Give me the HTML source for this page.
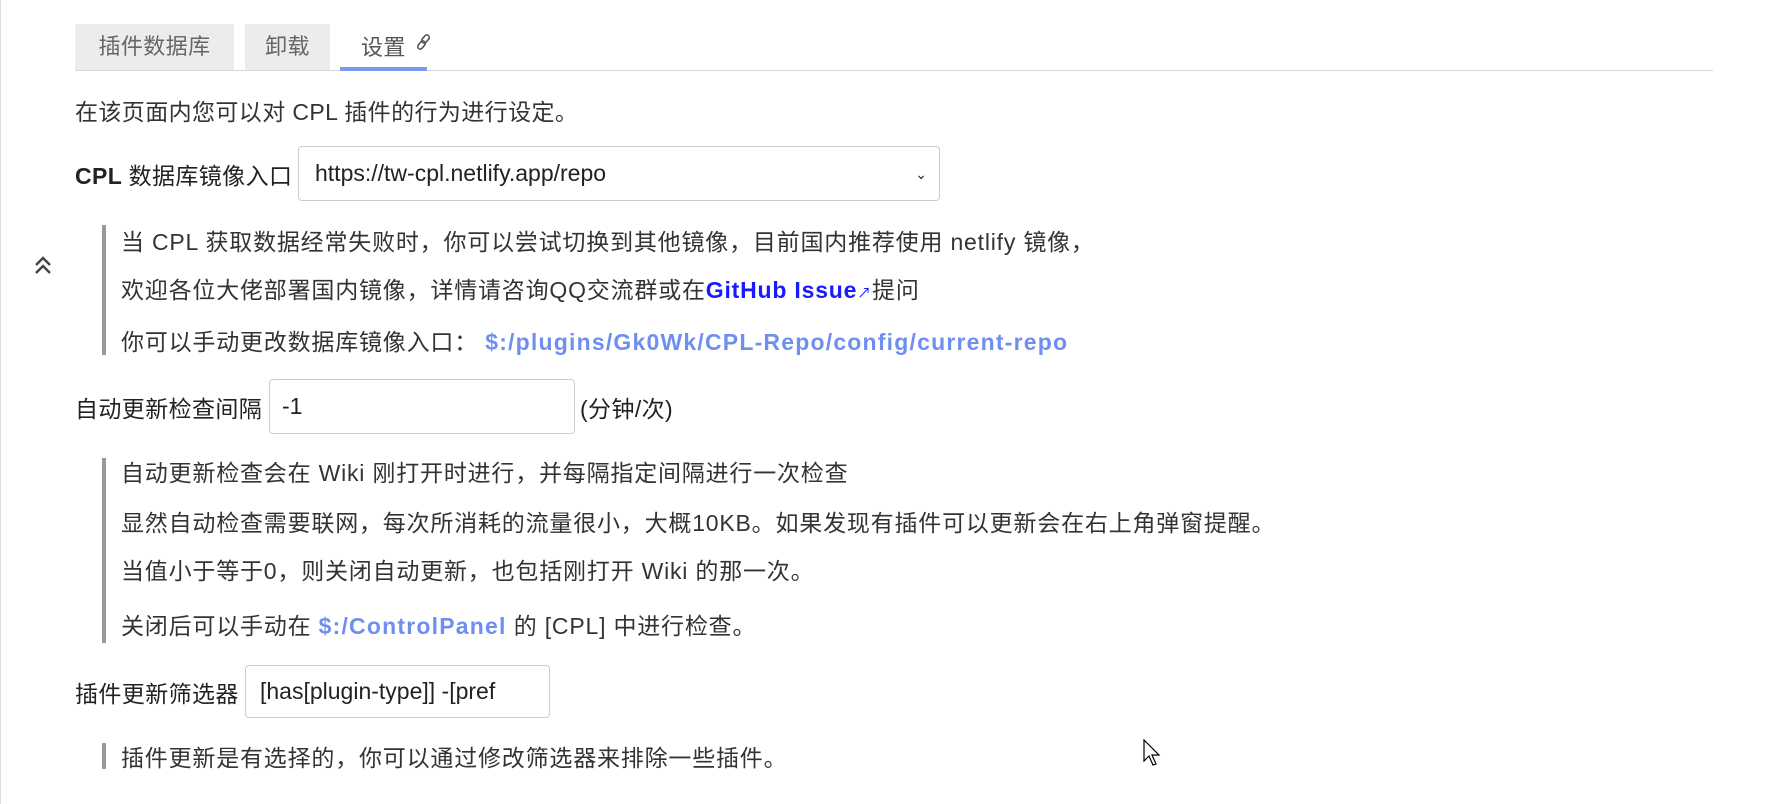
<!DOCTYPE html>
<html><head><meta charset="utf-8">
<style>
html,body{margin:0;padding:0;background:#fff;}
body{width:1785px;height:804px;position:relative;overflow:hidden;font-family:"Liberation Sans","Noto Sans CJK SC",sans-serif;color:#333;font-size:23px;letter-spacing:0.4px;}
.lb{position:absolute;left:0;top:0;width:1px;height:804px;background:#ddd;}
.abs{position:absolute;white-space:nowrap;}
.t{letter-spacing:0.8px;}
.tab{position:absolute;top:24px;height:46px;background:#ececec;color:#666;font-size:22px;line-height:46px;text-align:center;}
.tabline{position:absolute;left:75px;top:70px;width:1638px;height:1px;background:#d8d8d8;}
.bq{position:absolute;left:102px;width:4px;background:#9a9a9a;}
.box{position:absolute;border:1px solid #ccc;border-radius:4px;background:#fff;box-sizing:border-box;font-size:23px;color:#222;letter-spacing:0;}
.l1{color:#1a1aff;font-weight:bold;letter-spacing:0.8px;}
.l2{color:#6f8ff0;font-weight:bold;letter-spacing:1.2px;}
.lab{color:#222;}
</style></head><body>
<div class="lb"></div>
<div class="tab" style="left:75px;width:159px;">插件数据库</div>
<div class="tab" style="left:245px;width:85px;">卸载</div>
<div class="abs" style="left:361px;top:30px;color:#555;font-size:22px;">设置</div>
<svg class="abs" style="left:415px;top:33px" width="18" height="18" viewBox="0 0 18 18"><g fill="none" stroke="#555" stroke-width="1.6"><rect x="8" y="1.5" width="5" height="9" rx="2.5" transform="rotate(40 10.5 6)"/><rect x="4" y="7.5" width="5" height="9" rx="2.5" transform="rotate(40 6.5 12)"/></g></svg>
<div class="tabline"></div>
<div class="abs" style="left:340px;top:67px;width:87px;height:4px;background:#7b9aeb;"></div>

<div class="abs" style="left:75px;top:93px;">在该页面内您可以对 CPL 插件的行为进行设定。</div>

<div class="abs lab" style="left:75px;top:157px;font-weight:bold;">CPL <span style="font-weight:normal">数据库镜像入口</span></div>
<div class="box" style="left:298px;top:146px;width:642px;height:55px;line-height:53px;padding-left:16px;">https://tw-cpl.netlify.app/repo<span style="position:absolute;right:12px;font-size:14px;top:1px;">&#x2304;</span></div>

<svg class="abs" style="left:33px;top:254px" width="20" height="22" viewBox="0 0 20 22"><g fill="none" stroke="#444" stroke-width="2.4"><path d="M3 11 L10 4 L17 11"/><path d="M3 19 L10 12 L17 19"/></g></svg>
<div class="bq" style="top:225px;height:130px;"></div>
<div class="abs t" style="left:121px;top:223px;">当 CPL 获取数据经常失败时，你可以尝试切换到其他镜像，目前国内推荐使用 netlify 镜像，</div>
<div class="abs t" style="left:121px;top:271px;">欢迎各位大佬部署国内镜像，详情请咨询QQ交流群或在<span class="l1">GitHub Issue</span><span style="color:#1a1aff;font-size:14px">&#x2197;</span>提问</div>
<div class="abs t" style="left:121px;top:323px;">你可以手动更改数据库镜像入口： <span class="l2">$:/plugins/Gk0Wk/CPL-Repo/config/current-repo</span></div>

<div class="abs lab" style="left:75px;top:390px;">自动更新检查间隔</div>
<div class="box" style="left:269px;top:379px;width:306px;height:55px;line-height:53px;padding-left:12px;">-1</div>
<div class="abs lab" style="left:580px;top:390px;">(分钟/次)</div>

<div class="bq" style="top:458px;height:185px;"></div>
<div class="abs t" style="left:121px;top:454px;">自动更新检查会在 Wiki 刚打开时进行，并每隔指定间隔进行一次检查</div>
<div class="abs t" style="left:121px;top:504px;">显然自动检查需要联网，每次所消耗的流量很小，大概10KB。如果发现有插件可以更新会在右上角弹窗提醒。</div>
<div class="abs t" style="left:121px;top:552px;">当值小于等于0，则关闭自动更新，也包括刚打开 Wiki 的那一次。</div>
<div class="abs t" style="left:121px;top:607px;">关闭后可以手动在 <span class="l2">$:/ControlPanel</span> 的 [CPL] 中进行检查。</div>

<div class="abs lab" style="left:75px;top:675px;">插件更新筛选器</div>
<div class="box" style="left:245px;top:665px;width:305px;height:53px;line-height:51px;padding-left:14px;overflow:hidden;">[has[plugin-type]] -[pref</div>

<div class="bq" style="top:743px;height:26px;"></div>
<div class="abs t" style="left:121px;top:739px;">插件更新是有选择的，你可以通过修改筛选器来排除一些插件。</div>

<svg class="abs" style="left:1143px;top:739px" width="20" height="30" viewBox="0 0 20 30"><path d="M1 1 L1 22 L6 17 L10 26 L13 25 L9 16 L16 16 Z" fill="#fff" stroke="#000" stroke-width="1.2"/></svg>
</body></html>
